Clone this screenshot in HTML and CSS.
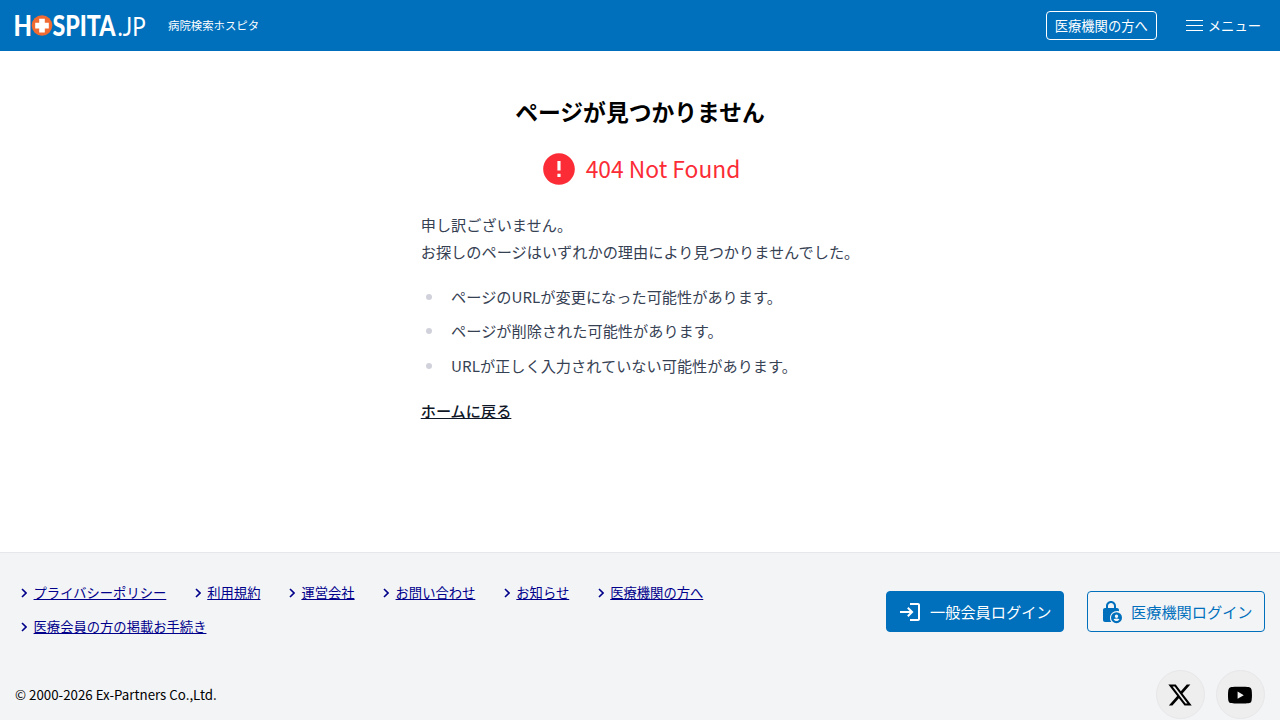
FILE: index.html
```
<!DOCTYPE html>
<html lang="ja">
<head>
    <meta charset="UTF-8" />
    <title>ページが見つかりません</title>
    <link rel="stylesheet" href="styles.css">
</head>
<body>
    <header class="header">
        <a class="logo" href="#">
            <svg width="138" height="46" viewBox="-1 -5 138 46">
                <text class="logo-bold" x="-1.500" y="27.500" textLength="18.500" lengthAdjust="spacingAndGlyphs">H</text>
                <circle cx="27" cy="17.500" r="10.300" fill="#f16a32" />
                <path d="M24.200 10.800h5.600v4h4v5.600h-4v4h-5.600v-4h-4v-5.600h4z" fill="#fff" />
                <text class="logo-bold" x="37.500" y="27.500" textLength="63" lengthAdjust="spacingAndGlyphs">SPITA</text>
                <text class="logo-thin" x="102.500" y="27.500" textLength="28" lengthAdjust="spacingAndGlyphs">.JP</text>
            </svg>
        </a>
        <p class="tagline">病院検索ホスピタ</p>
        <nav class="header-nav">
            <a class="clinic-link" href="#">医療機関の方へ</a>
            <button class="menu-button" type="button">
                <svg width="18" height="13" viewBox="0 0 18 13">
                    <path d="M0 1.500h17M0 6.500h17M0 11.500h17" stroke="#fff" stroke-width="1.200" />
                </svg>
                メニュー
            </button>
        </nav>
    </header>

    <main class="main">
        <h1>ページが見つかりません</h1>
        <p class="status">
            <svg width="38" height="38" viewBox="0 0 24 24" fill="currentColor">
                <path d="M12 2C6.480 2 2 6.480 2 12s4.480 10 10 10 10-4.480 10-10S17.520 2 12 2zm1 15h-2v-2h2v2zm0-4h-2V7h2v6z" />
            </svg>
            <span>404 Not Found</span>
        </p>
        <div class="prose">
            <p>申し訳ございません。<br>お探しのページはいずれかの理由により見つかりませんでした。</p>
            <ul>
                <li>ページのURLが変更になった可能性があります。</li>
                <li>ページが削除された可能性があります。</li>
                <li>URLが正しく入力されていない可能性があります。</li>
            </ul>
            <p><a href="#">ホームに戻る</a></p>
        </div>
    </main>

    <footer class="footer">
        <div class="footer-top">
            <ul class="footer-links">
                <li><svg class="chevron" viewBox="0 0 6 10"><path d="M1 1l4 4-4 4" /></svg><a href="#">プライバシーポリシー</a></li>
                <li><svg class="chevron" viewBox="0 0 6 10"><path d="M1 1l4 4-4 4" /></svg><a href="#">利用規約</a></li>
                <li><svg class="chevron" viewBox="0 0 6 10"><path d="M1 1l4 4-4 4" /></svg><a href="#">運営会社</a></li>
                <li><svg class="chevron" viewBox="0 0 6 10"><path d="M1 1l4 4-4 4" /></svg><a href="#">お問い合わせ</a></li>
                <li><svg class="chevron" viewBox="0 0 6 10"><path d="M1 1l4 4-4 4" /></svg><a href="#">お知らせ</a></li>
                <li><svg class="chevron" viewBox="0 0 6 10"><path d="M1 1l4 4-4 4" /></svg><a href="#">医療機関の方へ</a></li>
                <li><svg class="chevron" viewBox="0 0 6 10"><path d="M1 1l4 4-4 4" /></svg><a href="#">医療会員の方の掲載お手続き</a></li>
            </ul>
            <div class="login">
                <a class="login-button primary" href="#">
                    <svg width="24" height="24" viewBox="0 0 24 24" fill="currentColor">
                        <path d="M12 21v-2h8V5h-8V3h8c1.100 0 2 .9 2 2v14c0 1.100-.9 2-2 2zM10.500 17l-1.375-1.450L11.675 13H2v-2h9.675l-2.550-2.550L10.500 7l5 5z" />
                    </svg>
                    一般会員ログイン
                </a>
                <a class="login-button" href="#">
                    <svg width="24" height="24" viewBox="0 0 24 24" fill="currentColor">
                        <path d="M6 22c-1.100 0-2-.9-2-2V10c0-1.100.9-2 2-2h1V6c0-2.760 2.240-5 5-5s5 2.240 5 5v2h1c1.100 0 2 .9 2 2v1.300c-.6-.2-1.300-.3-2-.3-3.870 0-7 3.130-7 7 0 1.500.47 2.900 1.270 4zM9 8h6V6c0-1.660-1.340-3-3-3S9 4.340 9 6z" />
                        <path fill-rule="evenodd" d="M18 12.500a5.500 5.500 0 1 0 0 11 5.500 5.500 0 0 0 0-11zm0 2.300a1.700 1.700 0 1 1 0 3.400 1.700 1.700 0 0 1 0-3.400zm-3 4.700c1.500-1 4.500-1 6 0-.7 1.200-1.700 1.800-3 1.800s-2.300-.6-3-1.800z" transform="translate(-.5 -.3)" />
                    </svg>
                    医療機関ログイン
                </a>
            </div>
        </div>
        <div class="footer-bottom">
            <small>© 2000-2026 Ex-Partners Co.,Ltd.</small>
            <div class="social">
                <a href="#" aria-label="X">
                    <svg width="26" height="26" viewBox="0 0 24 24">
                        <path d="M18.244 2.250h3.308l-7.227 8.260 8.502 11.240H16.170l-5.214-6.817L4.990 21.750H1.680l7.730-8.835L1.254 2.250H8.080l4.713 6.231zm-1.161 17.520h1.833L7.084 4.126H5.117z" />
                    </svg>
                </a>
                <a href="#" aria-label="YouTube">
                    <svg width="24" height="24" viewBox="0 0 24 24">
                        <path d="M23.500 6.500a3 3 0 0 0-2.100-2.200C19.500 3.800 12 3.800 12 3.800s-7.500 0-9.400.5A3 3 0 0 0 .5 6.500C0 8.400 0 12.200 0 12.200s0 3.800.5 5.700a3 3 0 0 0 2.100 2.200c1.900.5 9.400.5 9.400.5s7.500 0 9.400-.5a3 3 0 0 0 2.100-2.200c.5-1.900.5-5.700.5-5.700s0-3.800-.5-5.700zM9.600 15.800V8.600l6.200 3.600z" />
                    </svg>
                </a>
            </div>
        </div>
    </footer>
</body>
</html>
```
FILE: styles.css
```
* {
    box-sizing: border-box;
    margin: 0;
    padding: 0;
}

html {
    font-size: 15.2px;
}

body {
    font-family: "Noto Sans CJK JP", sans-serif;
    line-height: 1.5;
    color: #000;
    background-color: #fff;
    height: 100vh;
    overflow: hidden;
    display: flex;
    flex-direction: column;
}

.header {
    height: 51px;
    flex-shrink: 0;
    display: flex;
    align-items: center;
    padding: 0 19px 0 14px;
    background-color: #0070bd;
    color: #fff;
}

.logo {
    display: flex;
    width: 154px;
}

.logo text {
    fill: #fff;
    font-family: Lato, sans-serif;
    font-size: 27.5px;
}

.logo .logo-bold {
    font-weight: 900;
}

.logo .logo-thin {
    font-weight: 400;
}

.tagline {
    font-size: 0.75rem;
}

.header-nav {
    display: flex;
    align-items: center;
    gap: 29px;
    margin-left: auto;
    font-size: 0.875rem;
}

.clinic-link {
    height: 29px;
    padding: 0 8px;
    line-height: 27px;
    border: 1px solid #fff;
    border-radius: 4px;
    color: #fff;
    text-decoration: none;
}

.menu-button {
    display: flex;
    align-items: center;
    gap: 4px;
    border: none;
    background: none;
    color: #fff;
    font: inherit;
}

.main {
    height: 501px;
    flex-shrink: 0;
    display: flex;
    flex-direction: column;
    align-items: center;
    padding-top: 43px;
}

h1 {
    font-size: 1.5rem;
    line-height: 36px;
}

.status {
    display: flex;
    align-items: center;
    gap: 8px;
    height: 38px;
    margin-top: 20px;
    font-size: 1.5rem;
    color: #fb2c36;
}

.prose {
    margin-top: 23px;
    line-height: 1.75;
    color: #364153;
}

.prose ul {
    margin: 19px 0;
    padding-left: 1.625em;
}

.prose li {
    margin: 0.5em 0;
    padding-left: 0.375em;
}

.prose li::marker {
    color: #d1d1dc;
}

.prose a {
    color: #101828;
    font-weight: 500;
}

.footer {
    flex: 1;
    padding: 23px 15px 0;
    border-top: 1px solid #e5e7eb;
    background-color: #f3f4f6;
}

.footer-top {
    display: flex;
    justify-content: space-between;
    height: 94px;
}

.footer-links {
    display: flex;
    flex-wrap: wrap;
    align-content: flex-start;
    column-gap: 22.4px;
    width: 760px;
    list-style: none;
    font-size: 0.875rem;
}

.footer-links li {
    display: flex;
    align-items: center;
    height: 34px;
    padding-left: 6.2px;
}

.footer-links a {
    color: #00008b;
}

.chevron {
    width: 6px;
    height: 10px;
    margin-right: 6.4px;
    fill: none;
    stroke: #00008b;
    stroke-width: 1.6;
}

.login {
    display: flex;
    gap: 23px;
    padding-top: 15px;
}

.login-button {
    display: flex;
    align-items: center;
    gap: 8px;
    width: 178px;
    height: 41px;
    padding-left: 11px;
    border: 1px solid #0070bd;
    border-radius: 4px;
    color: #0070bd;
    text-decoration: none;
    white-space: nowrap;
}

.login-button.primary {
    background-color: #0070bd;
    color: #fff;
}

.footer-bottom {
    display: flex;
    align-items: center;
    justify-content: space-between;
    height: 49px;
}

.footer-bottom small {
    font-size: 0.875rem;
}

.social {
    display: flex;
    gap: 11px;
}

.social a {
    display: flex;
    align-items: center;
    justify-content: center;
    width: 49px;
    height: 49px;
    padding-right: 1px;
    border: 1px solid #e7e7e9;
    border-radius: 50%;
    background-color: #eee;
}
```
